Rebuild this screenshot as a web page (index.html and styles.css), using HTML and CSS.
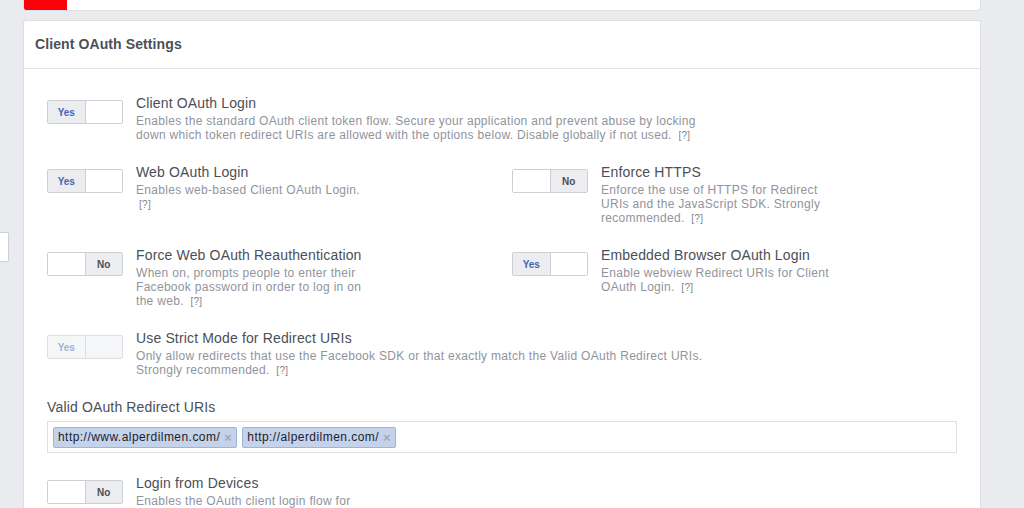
FILE: index.html
```html
<!DOCTYPE html>
<html>
<head>
<meta charset="utf-8">
<link rel="stylesheet" href="styles.css">
</head>
<body>
<div class="page">
  <div class="gutter"><div class="stub"></div></div>
  <div class="main">
    <div class="top-card"><div class="red-tab"></div></div>
    <div class="card">
      <div class="card-header">Client OAuth Settings</div>
      <div class="card-body">
        <div class="row">
          <div class="toggle on"><span class="seg yes">Yes</span><span class="seg"></span></div>
          <div class="text wide">
            <div class="title">Client OAuth Login</div>
            <div class="desc">Enables the standard OAuth client token flow. Secure your application and prevent abuse by locking down which token redirect URIs are allowed with the options below. Disable globally if not used. <span class="help">[?]</span></div>
          </div>
        </div>
        <div class="grid">
          <div class="row">
            <div class="toggle on"><span class="seg yes">Yes</span><span class="seg"></span></div>
            <div class="text">
              <div class="title">Web OAuth Login</div>
              <div class="desc">Enables web-based Client OAuth Login. <span class="help">[?]</span></div>
            </div>
          </div>
          <div class="row">
            <div class="toggle off"><span class="seg"></span><span class="seg no">No</span></div>
            <div class="text">
              <div class="title">Enforce HTTPS</div>
              <div class="desc">Enforce the use of HTTPS for Redirect URIs and the JavaScript SDK. Strongly recommended. <span class="help">[?]</span></div>
            </div>
          </div>
          <div class="row">
            <div class="toggle off"><span class="seg"></span><span class="seg no">No</span></div>
            <div class="text">
              <div class="title">Force Web OAuth Reauthentication</div>
              <div class="desc">When on, prompts people to enter their Facebook password in order to log in on the web. <span class="help">[?]</span></div>
            </div>
          </div>
          <div class="row">
            <div class="toggle on"><span class="seg yes">Yes</span><span class="seg"></span></div>
            <div class="text">
              <div class="title">Embedded Browser OAuth Login</div>
              <div class="desc">Enable webview Redirect URIs for Client OAuth Login. <span class="help">[?]</span></div>
            </div>
          </div>
        </div>
        <div class="row">
          <div class="toggle on disabled"><span class="seg yes">Yes</span><span class="seg"></span></div>
          <div class="text wide">
            <div class="title">Use Strict Mode for Redirect URIs</div>
            <div class="desc">Only allow redirects that use the Facebook SDK or that exactly match the Valid OAuth Redirect URIs. Strongly recommended. <span class="help">[?]</span></div>
          </div>
        </div>
        <div class="field">
          <div class="field-label">Valid OAuth Redirect URIs</div>
          <div class="token-input">
            <span class="token">http://www.alperdilmen.com/<span class="x">×</span></span>
            <span class="token">http://alperdilmen.com/<span class="x">×</span></span>
          </div>
        </div>
        <div class="row">
          <div class="toggle off"><span class="seg"></span><span class="seg no">No</span></div>
          <div class="text">
            <div class="title">Login from Devices</div>
            <div class="desc">Enables the OAuth client login flow for devices like a smart TV. <span class="help">[?]</span></div>
          </div>
        </div>
      </div>
    </div>
  </div>
</div>
</body>
</html>
```

FILE: styles.css
```css
html, body {
  margin: 0;
  padding: 0;
  background: #e9ebee;
  font-family: "Liberation Sans", Arial, sans-serif;
  height: 508px;
  overflow: hidden;
}
.page {
  display: flex;
  align-items: flex-start;
}
.gutter {
  width: 23px;
  flex: none;
}
.stub {
  margin-top: 232px;
  width: 8px;
  height: 28px;
  background: #fff;
  border: 1px solid #ccd0d5;
  border-left: none;
  border-radius: 0 2px 2px 0;
}
.main {
  width: 958px;
  flex: none;
}
.top-card {
  height: 10px;
  background: #fff;
  border: 1px solid #dddfe2;
  border-top: none;
  border-radius: 0 0 3px 3px;
  overflow: hidden;
}
.red-tab {
  width: 44px;
  height: 10px;
  background: #fa0209;
  border-radius: 0 0 0 3px;
  margin-left: -1px;
}
.card {
  margin-top: 9px;
  background: #fff;
  border: 1px solid #dddfe2;
  border-radius: 3px 3px 0 0;
  border-bottom: none;
  height: 600px;
}
.card-header {
  height: 48px;
  box-sizing: border-box;
  padding: 0 11px 2px 11px;
  display: flex;
  align-items: center;
  font-size: 14px;
  font-weight: bold;
  color: #4b4f56;
  letter-spacing: 0.1px;
  border-bottom: 1px solid #e5e5e5;
}
.card-body {
  padding: 25px 23px 0 23px;
}
.grid {
  display: grid;
  grid-template-columns: 465px 1fr;
}
.row {
  display: flex;
  gap: 13px;
  margin-bottom: 21px;
  align-items: flex-start;
}
.toggle {
  display: flex;
  width: 76px;
  height: 24px;
  box-sizing: border-box;
  border: 1px solid #ccd0d5;
  border-radius: 2px;
  margin-top: 6px;
  flex: none;
  overflow: hidden;
}
.seg {
  flex: 1;
  display: flex;
  align-items: center;
  justify-content: center;
  font-size: 10px;
  font-weight: bold;
  background: #fff;
}
.seg.yes {
  background: #ebedf0;
  color: #4267b2;
  border-right: 1px solid #ccd0d5;
}
.seg.no {
  background: #ebedf0;
  color: #4b4f56;
  border-left: 1px solid #ccd0d5;
}
.toggle.disabled {
  border-color: #dddfe2;
}
.toggle.disabled .seg {
  background: #f5f6f7;
}
.toggle.disabled .seg.yes {
  color: #9cb4d8;
  border-right-color: #dddfe2;
}
.text {
  width: 232px;
}
.text.wide {
  width: 572px;
}
.title {
  font-size: 14px;
  line-height: 18px;
  color: #4b4f56;
  letter-spacing: 0.15px;
}
.desc {
  margin-top: 2px;
  font-size: 12px;
  line-height: 14px;
  color: #90949c;
  letter-spacing: 0.3px;
}
.help {
  font-size: 10px;
  line-height: 1;
  margin-left: 3px;
  color: #7f838a;
}
.field {
  margin-bottom: 21px;
}
.field-label {
  font-size: 14px;
  line-height: 18px;
  color: #4b4f56;
  letter-spacing: 0.15px;
  margin-bottom: 5px;
}
.token-input {
  height: 32px;
  box-sizing: border-box;
  border: 1px solid #dddfe2;
  display: flex;
  align-items: center;
  gap: 5px;
  padding: 0 5px;
}
.token {
  display: inline-flex;
  align-items: center;
  height: 21px;
  box-sizing: border-box;
  padding: 0 4px;
  background: #c4d2eb;
  border: 1px solid #9cb4d8;
  border-radius: 2px;
  font-size: 12px;
  letter-spacing: 0.45px;
  color: #1d2129;
}
.token .x {
  color: #a3a8b1;
  font-size: 13px;
  margin-left: 4px;
  font-weight: bold;
}
```
